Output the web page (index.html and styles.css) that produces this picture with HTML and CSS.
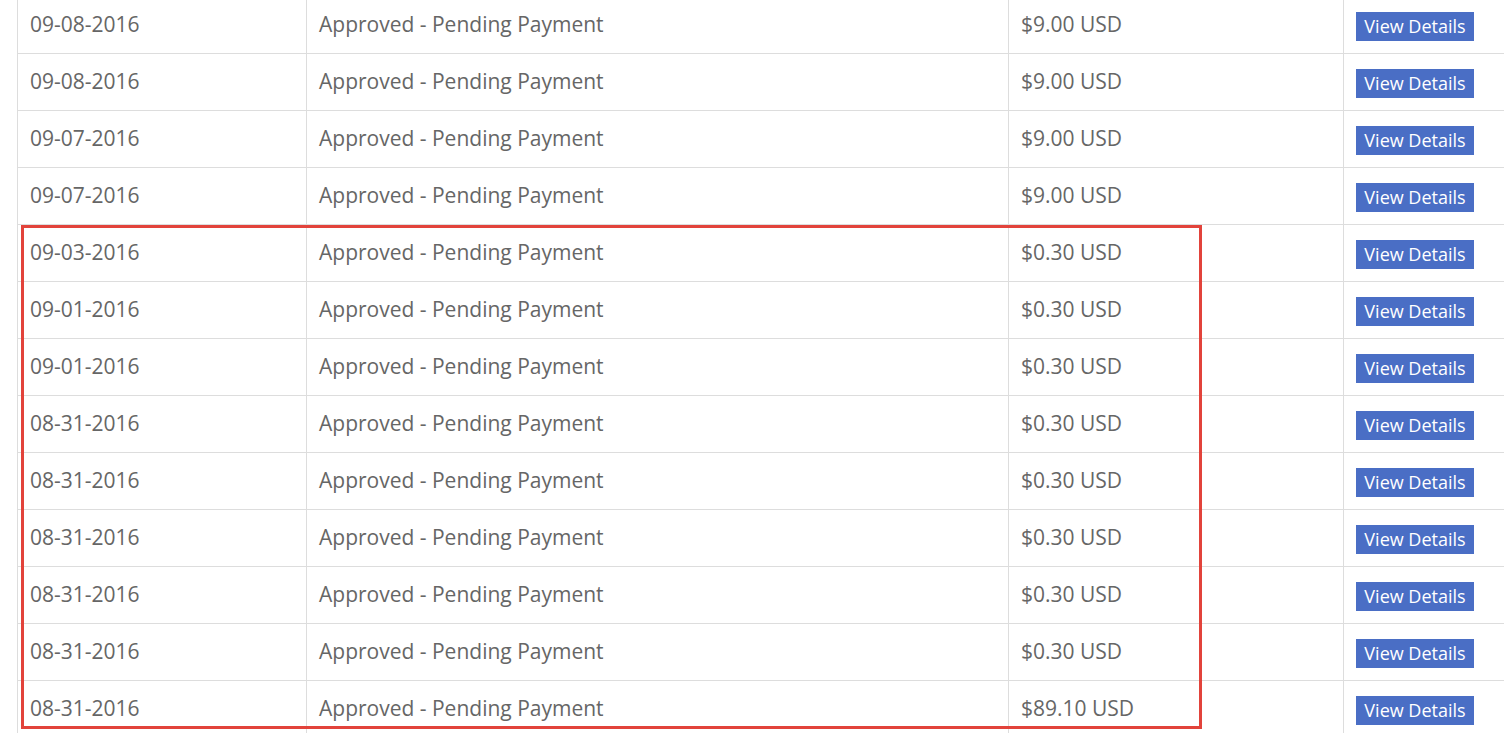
FILE: index.html
```html
<!DOCTYPE html>
<html>
<head>
<meta charset="utf-8">
<link rel="stylesheet" href="styles.css">
</head>
<body>
<div class="wrap">
<table class="orders">
<colgroup><col class="c1"><col class="c2"><col class="c3"><col class="c4"></colgroup>
<tbody>
<tr><td>09-08-2016</td><td>Approved - Pending Payment</td><td>$9.00 USD</td><td><a class="btn">View Details</a></td></tr>
<tr><td>09-08-2016</td><td>Approved - Pending Payment</td><td>$9.00 USD</td><td><a class="btn">View Details</a></td></tr>
<tr><td>09-07-2016</td><td>Approved - Pending Payment</td><td>$9.00 USD</td><td><a class="btn">View Details</a></td></tr>
<tr><td>09-07-2016</td><td>Approved - Pending Payment</td><td>$9.00 USD</td><td><a class="btn">View Details</a></td></tr>
<tr><td>09-03-2016</td><td>Approved - Pending Payment</td><td>$0.30 USD</td><td><a class="btn">View Details</a></td></tr>
<tr><td>09-01-2016</td><td>Approved - Pending Payment</td><td>$0.30 USD</td><td><a class="btn">View Details</a></td></tr>
<tr><td>09-01-2016</td><td>Approved - Pending Payment</td><td>$0.30 USD</td><td><a class="btn">View Details</a></td></tr>
<tr><td>08-31-2016</td><td>Approved - Pending Payment</td><td>$0.30 USD</td><td><a class="btn">View Details</a></td></tr>
<tr><td>08-31-2016</td><td>Approved - Pending Payment</td><td>$0.30 USD</td><td><a class="btn">View Details</a></td></tr>
<tr><td>08-31-2016</td><td>Approved - Pending Payment</td><td>$0.30 USD</td><td><a class="btn">View Details</a></td></tr>
<tr><td>08-31-2016</td><td>Approved - Pending Payment</td><td>$0.30 USD</td><td><a class="btn">View Details</a></td></tr>
<tr><td>08-31-2016</td><td>Approved - Pending Payment</td><td>$0.30 USD</td><td><a class="btn">View Details</a></td></tr>
<tr><td>08-31-2016</td><td>Approved - Pending Payment</td><td>$89.10 USD</td><td><a class="btn">View Details</a></td></tr>
</tbody>
</table>
<div class="highlight"></div>
</div>
</body>
</html>
```
FILE: styles.css
```css
html, body {
  margin: 0;
  padding: 0;
  background: #fff;
  overflow: hidden;
}
.wrap {
  position: relative;
  width: 1504px;
  height: 733px;
  overflow: hidden;
}
.orders {
  border-collapse: collapse;
  margin: -4px 0 0 17px;
  width: 1560px;
  table-layout: fixed;
  font-family: "Open Sans", sans-serif;
  font-size: 21px;
  color: #666;
}
.c1 { width: 289px; }
.c2 { width: 702px; }
.c3 { width: 335px; }
.c4 { width: 234px; }
.orders td {
  border: 1px solid #dddddd;
  height: 54px;
  padding: 0 12px 2px;
  vertical-align: middle;
  white-space: nowrap;
}
.orders tr:first-child td { border-top-color: transparent; }
.btn {
  display: inline-flex;
  align-items: center;
  justify-content: center;
  width: 118px;
  height: 29px;
  margin-top: 4px;
  background: #4a6ec5;
  color: #fff;
  font-size: 18px;
  line-height: 1;
  box-sizing: border-box;
}
.highlight {
  position: absolute;
  left: 21px;
  top: 225px;
  width: 1181px;
  height: 504px;
  border: 3px solid #e2433b;
  box-sizing: border-box;
  pointer-events: none;
}
```
